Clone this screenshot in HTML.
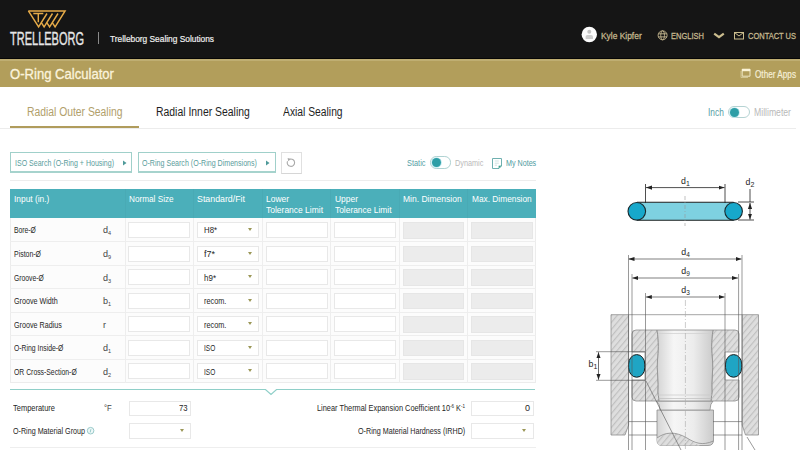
<!DOCTYPE html>
<html><head><meta charset="utf-8">
<style>
*{margin:0;padding:0;box-sizing:border-box}
html,body{width:800px;height:450px;overflow:hidden;background:#fff;font-family:"Liberation Sans",sans-serif}
.a{position:absolute}
.t{position:absolute;white-space:nowrap;line-height:1;transform-origin:0 50%}
.inp{position:absolute;background:#fff;border:1px solid #e8e8e8}
.gry{position:absolute;background:#ececec;border:1px solid #e6e6e6}
.tri{position:absolute;width:0;height:0;border-left:2.4px solid transparent;border-right:2.4px solid transparent;border-top:3.2px solid #9b9757}
.hl{position:absolute;height:1px;background:#eeeeee}
.vl{position:absolute;width:1px;background:#eeeeee}
</style></head><body>
<!-- header -->
<div class="a" style="left:0;top:0;width:800px;height:59px;background:#151515"></div>
<div class="a" style="left:0;top:59px;width:800px;height:28px;background:#b29e5b"></div>
<div class="a" style="left:0;top:59px;width:800px;height:2px;background:#bfae72"></div>
<div class="a" style="left:0;top:58px;width:800px;height:1px;background:#060606"></div>
<!-- logo -->
<svg class="a" style="left:0;top:0" width="800" height="450" viewBox="0 0 800 450">
 <g fill="none" stroke="#e6ab48" stroke-width="1.45" stroke-linejoin="miter" stroke-linecap="butt">
  <path d="M28.4 10.9 L38.6 26.9 L47 13.5"/>
  <path d="M41.3 22.55 L44.1 26.9 L52.5 13.5"/>
  <path d="M46.8 22.55 L49.6 26.9 L58 13.5"/>
  <path d="M52.3 22.55 L55.1 26.9 L65.1 10.9 L28.4 10.9"/>
  <path d="M33.3 13.4 H43.3 M38.3 13.4 V22.2"/>
 </g>
 <line x1="98.5" y1="32" x2="98.5" y2="44" stroke="#8a8a8a" stroke-width="1"/>
 <!-- user icon -->
 <circle cx="589.3" cy="34.5" r="7.7" fill="#fbfbfb"/>
 <circle cx="589.3" cy="31.8" r="2" fill="#c4c4c4"/>
 <path d="M585.6 39 L585.6 36.8 Q585.6 35 587.5 35 L591.1 35 Q593 35 593 36.8 L593 39 Z" fill="#cdcdcd"/>
 <!-- globe -->
 <g fill="none" stroke="#c4b78e" stroke-width="0.9">
  <circle cx="662.6" cy="35.3" r="4.5"/>
  <ellipse cx="662.6" cy="35.3" rx="1.9" ry="4.5"/>
  <line x1="658.3" y1="33.8" x2="666.9" y2="33.8"/>
  <line x1="658.3" y1="36.9" x2="666.9" y2="36.9"/>
 </g>
 <!-- chevron -->
 <path d="M714.2 33.6 L719 37.2 L723.8 33.6" fill="none" stroke="#cbbd8e" stroke-width="2.2"/>
 <!-- mail -->
 <g fill="none" stroke="#cbbd8e" stroke-width="1">
  <rect x="734.5" y="32.5" width="9" height="6.5"/>
  <path d="M734.5 32.5 L739 36 L743.5 32.5"/>
 </g>
 <!-- other apps icon -->
 <path d="M742.2 69.2 L750 69.2 L750 76.2 L742.2 76.2 Z" fill="none" stroke="#eee6c4" stroke-width="1"/>
 <rect x="742" y="69" width="8.2" height="2.2" fill="#fbf3d6"/>
 <path d="M741 71 L741 77.5 L748 77.5" fill="none" stroke="#d9cf9f" stroke-width="0.8"/>
</svg>
<!-- tabs -->
<div class="a" style="left:0;top:127.8px;width:796px;height:1px;background:#ececec"></div>
<div class="a" style="left:10px;top:125.5px;width:128.7px;height:2.6px;background:#b09c5c"></div>
<!-- inch toggle -->
<div class="a" style="left:728.4px;top:105.8px;width:21.2px;height:12px;border:1px solid #b5d3d3;border-radius:6px;background:#fff"></div>
<div class="a" style="left:729.6px;top:107.6px;width:9.6px;height:9.6px;border-radius:50%;background:#2d9ea6;box-shadow:0 0 0 0.8px #bfeaf0"></div>
<!-- buttons -->
<div class="a" style="left:9.5px;top:152px;width:122.5px;height:21px;border:1px solid #a0d0ca;border-bottom:2px solid #a6d3cd"></div>
<div class="a" style="left:137.5px;top:152px;width:138px;height:21px;border:1px solid #a0d0ca;border-bottom:2px solid #a6d3cd"></div>
<div class="a" style="left:281px;top:152px;width:21px;height:21.5px;border:1px solid #e0e0e0;border-bottom:1.5px solid #d6d6d6"></div>
<svg class="a" style="left:0;top:0" width="800" height="450" viewBox="0 0 800 450">
 <path d="M123 160.5 L126.5 163 L123 165.5 Z" fill="#4f9a9a"/>
 <path d="M266 160.5 L269.5 163 L266 165.5 Z" fill="#4f9a9a"/>
 <path d="M289.6 159.2 A3.7 3.7 0 1 1 287.5 161.2" fill="none" stroke="#a9a9a9" stroke-width="1.1"/>
 <path d="M287.6 157.9 L290.9 159.0 L288.3 161.3 Z" fill="#a9a9a9"/>
 <!-- notes icon -->
 <path d="M492.5 158.5 L501.5 158.5 L501.5 166 L499 168.5 L492.5 168.5 Z" fill="none" stroke="#6fb0b0" stroke-width="1"/>
 <path d="M494.8 161 L498.8 161 M494.8 163.2 L498.8 163.2 M494.8 165.2 L497 165.2" stroke="#bcd6d6" stroke-width="0.7"/>
 <path d="M498.6 168.6 L501.6 165.6 L498.6 165.8 Z" fill="#3aa08a"/>
 </svg>
<!-- static toggle -->
<div class="a" style="left:430.1px;top:156.2px;width:21.1px;height:12.4px;border:1px solid #afd2d2;border-radius:6.2px;background:#fff"></div>
<div class="a" style="left:431.6px;top:157.7px;width:9.4px;height:9.4px;border-radius:50%;background:#2d9ea6;box-shadow:0 0 0 0.8px #bfeaf0"></div>
<div class="a" style="left:10px;top:180px;width:526px;height:1px;background:#ededed"></div>
<!-- table -->
<div class="a" style="left:10px;top:189px;width:526px;height:29px;background:#4bafba"></div>
<div class="a" style="left:10px;top:218px;width:526px;height:165px;background:#fcfcfc;border:1px solid #ececec;border-top:none"></div>
<div class='a' style='left:124.5px;top:189px;width:1px;height:29px;background:rgba(0,0,0,0.025)'></div>
<div class='a' style='left:192.5px;top:189px;width:1px;height:29px;background:rgba(0,0,0,0.025)'></div>
<div class='a' style='left:261.5px;top:189px;width:1px;height:29px;background:rgba(0,0,0,0.025)'></div>
<div class='a' style='left:329.5px;top:189px;width:1px;height:29px;background:rgba(0,0,0,0.025)'></div>
<div class='a' style='left:399.2px;top:189px;width:1px;height:29px;background:rgba(0,0,0,0.025)'></div>
<div class='a' style='left:467.3px;top:189px;width:1px;height:29px;background:rgba(0,0,0,0.025)'></div>
<div class='vl' style='left:124.5px;top:218px;height:165px'></div>
<div class='vl' style='left:192.5px;top:218px;height:165px'></div>
<div class='vl' style='left:261.5px;top:218px;height:165px'></div>
<div class='vl' style='left:329.5px;top:218px;height:165px'></div>
<div class='vl' style='left:399.2px;top:218px;height:165px'></div>
<div class='vl' style='left:467.3px;top:218px;height:165px'></div>
<div class='hl' style='left:10px;top:241.07px;width:526px'></div>
<div class='hl' style='left:10px;top:264.64px;width:526px'></div>
<div class='hl' style='left:10px;top:288.21px;width:526px'></div>
<div class='hl' style='left:10px;top:311.78px;width:526px'></div>
<div class='hl' style='left:10px;top:335.35px;width:526px'></div>
<div class='hl' style='left:10px;top:358.92px;width:526px'></div>
<div class='inp' style='left:128.4px;top:222.00px;width:62.0px;height:16px'></div>
<div class='inp' style='left:197.4px;top:222.00px;width:61.6px;height:16px'></div>
<div class='inp' style='left:265.5px;top:222.00px;width:62.9px;height:16px'></div>
<div class='inp' style='left:333.8px;top:222.00px;width:62.2px;height:16px'></div>
<div class='tri' style='left:247.8px;top:228.00px'></div>
<div class='gry' style='left:402.5px;top:222.00px;width:61.9px;height:16.5px'></div>
<div class='gry' style='left:471px;top:222.00px;width:62.3px;height:16.5px'></div>
<div class='inp' style='left:128.4px;top:245.57px;width:62.0px;height:16px'></div>
<div class='inp' style='left:197.4px;top:245.57px;width:61.6px;height:16px'></div>
<div class='inp' style='left:265.5px;top:245.57px;width:62.9px;height:16px'></div>
<div class='inp' style='left:333.8px;top:245.57px;width:62.2px;height:16px'></div>
<div class='tri' style='left:247.8px;top:251.57px'></div>
<div class='gry' style='left:402.5px;top:245.57px;width:61.9px;height:16.5px'></div>
<div class='gry' style='left:471px;top:245.57px;width:62.3px;height:16.5px'></div>
<div class='inp' style='left:128.4px;top:269.14px;width:62.0px;height:16px'></div>
<div class='inp' style='left:197.4px;top:269.14px;width:61.6px;height:16px'></div>
<div class='inp' style='left:265.5px;top:269.14px;width:62.9px;height:16px'></div>
<div class='inp' style='left:333.8px;top:269.14px;width:62.2px;height:16px'></div>
<div class='tri' style='left:247.8px;top:275.14px'></div>
<div class='gry' style='left:402.5px;top:269.14px;width:61.9px;height:16.5px'></div>
<div class='gry' style='left:471px;top:269.14px;width:62.3px;height:16.5px'></div>
<div class='inp' style='left:128.4px;top:292.71px;width:62.0px;height:16px'></div>
<div class='inp' style='left:197.4px;top:292.71px;width:61.6px;height:16px'></div>
<div class='inp' style='left:265.5px;top:292.71px;width:62.9px;height:16px'></div>
<div class='inp' style='left:333.8px;top:292.71px;width:62.2px;height:16px'></div>
<div class='tri' style='left:247.8px;top:298.71px'></div>
<div class='gry' style='left:402.5px;top:292.71px;width:61.9px;height:16.5px'></div>
<div class='gry' style='left:471px;top:292.71px;width:62.3px;height:16.5px'></div>
<div class='inp' style='left:128.4px;top:316.28px;width:62.0px;height:16px'></div>
<div class='inp' style='left:197.4px;top:316.28px;width:61.6px;height:16px'></div>
<div class='inp' style='left:265.5px;top:316.28px;width:62.9px;height:16px'></div>
<div class='inp' style='left:333.8px;top:316.28px;width:62.2px;height:16px'></div>
<div class='tri' style='left:247.8px;top:322.28px'></div>
<div class='gry' style='left:402.5px;top:316.28px;width:61.9px;height:16.5px'></div>
<div class='gry' style='left:471px;top:316.28px;width:62.3px;height:16.5px'></div>
<div class='inp' style='left:128.4px;top:339.85px;width:62.0px;height:16px'></div>
<div class='inp' style='left:197.4px;top:339.85px;width:61.6px;height:16px'></div>
<div class='inp' style='left:265.5px;top:339.85px;width:62.9px;height:16px'></div>
<div class='inp' style='left:333.8px;top:339.85px;width:62.2px;height:16px'></div>
<div class='tri' style='left:247.8px;top:345.85px'></div>
<div class='gry' style='left:402.5px;top:339.85px;width:61.9px;height:16.5px'></div>
<div class='gry' style='left:471px;top:339.85px;width:62.3px;height:16.5px'></div>
<div class='inp' style='left:128.4px;top:363.42px;width:62.0px;height:16px'></div>
<div class='inp' style='left:197.4px;top:363.42px;width:61.6px;height:16px'></div>
<div class='inp' style='left:265.5px;top:363.42px;width:62.9px;height:16px'></div>
<div class='inp' style='left:333.8px;top:363.42px;width:62.2px;height:16px'></div>
<div class='tri' style='left:247.8px;top:369.42px'></div>
<div class='gry' style='left:402.5px;top:363.42px;width:61.9px;height:16.5px'></div>
<div class='gry' style='left:471px;top:363.42px;width:62.3px;height:16.5px'></div>
<!-- bottom -->
<svg class="a" style="left:0;top:0" width="800" height="450" viewBox="0 0 800 450">
 <path d="M10 389.5 L265.5 389.5 L271 394.5 L276.5 389.5 L535 389.5" fill="none" stroke="#8fcfc8" stroke-width="1.2"/>
 <circle cx="90.6" cy="430.7" r="3.3" fill="#eef8f8" stroke="#8fc4c4" stroke-width="0.9"/>
 <path d="M90.9 429.2 L90.2 432.4" stroke="#8fc4c4" stroke-width="0.9"/>
</svg>
<div class="inp" style="left:128.7px;top:400.5px;width:62.5px;height:15px"></div>
<div class="inp" style="left:128.7px;top:423px;width:62.5px;height:15.5px"></div>
<div class="tri" style="left:179.8px;top:429.3px"></div>
<div class="inp" style="left:471px;top:400.5px;width:62.7px;height:15px"></div>
<div class="inp" style="left:471px;top:423px;width:62.7px;height:15.5px"></div>
<div class="tri" style="left:521.5px;top:429.3px"></div>
<div class="a" style="left:10px;top:446.5px;width:526px;height:1px;background:#eeeeee"></div>
<svg class="a" style="left:0;top:0" width="800" height="450" viewBox="0 0 800 450">
 <defs>
  <pattern id="hatch" patternUnits="userSpaceOnUse" width="4.5" height="4.5" patternTransform="rotate(40)">
   <rect width="4.5" height="4.5" fill="#dedede"/>
   <line x1="0.6" y1="0" x2="0.6" y2="4.5" stroke="#bfbfbf" stroke-width="1.1"/>
  </pattern>
  <linearGradient id="rod" x1="0" x2="1" y1="0" y2="0">
   <stop offset="0" stop-color="#d4d4d4"/>
   <stop offset="0.3" stop-color="#f6f6f6"/>
   <stop offset="0.65" stop-color="#ececec"/>
   <stop offset="1" stop-color="#cbcbcb"/>
  </linearGradient>
  <marker id="ar" viewBox="0 0 10 10" refX="10" refY="5" markerWidth="6" markerHeight="6" orient="auto-start-reverse" markerUnits="userSpaceOnUse">
   <path d="M0 1.5 L10 5 L0 8.5 Z" fill="#222"/>
  </marker>
 </defs>
 <!-- O-ring top view -->
 <rect x="637" y="202.3" width="96.6" height="18" fill="#7ed1e1"/>
 <line x1="637" y1="202.3" x2="733.6" y2="202.3" stroke="#1e1e1e" stroke-width="1.1"/>
 <line x1="637" y1="220.3" x2="733.6" y2="220.3" stroke="#1e1e1e" stroke-width="1.1"/>
 <circle cx="636.8" cy="211.3" r="8.8" fill="#17a8cb" stroke="#1a2a2e" stroke-width="1.1"/>
 <circle cx="733.6" cy="211.3" r="8.8" fill="#17a8cb" stroke="#1a2a2e" stroke-width="1.1"/>
 <line x1="685" y1="196" x2="685" y2="226" stroke="#999" stroke-width="0.6" stroke-dasharray="4 2 1 2"/>
 <g stroke="#222" stroke-width="0.8" fill="none">
  <line x1="645.5" y1="184" x2="645.5" y2="203"/>
  <line x1="725" y1="184" x2="725" y2="203"/>
  <line x1="646" y1="187.6" x2="724.5" y2="187.6" marker-start="url(#ar)" marker-end="url(#ar)"/>
  <line x1="738" y1="202" x2="754" y2="202"/>
  <line x1="738" y1="220" x2="754" y2="220"/>
  <line x1="750" y1="189" x2="750" y2="202"/>
  <line x1="750" y1="203" x2="750" y2="219.5" marker-start="url(#ar)" marker-end="url(#ar)"/>
 </g>
 <!-- housing -->
 <g stroke="#2a2a2a" stroke-width="0.6" fill="none">
  <line x1="628.5" y1="259" x2="741.5" y2="259" marker-start="url(#ar)" marker-end="url(#ar)"/>
  <line x1="632.3" y1="278" x2="738" y2="278" marker-start="url(#ar)" marker-end="url(#ar)"/>
  <line x1="645.8" y1="297" x2="724.7" y2="297" marker-start="url(#ar)" marker-end="url(#ar)"/>
 </g>
 <!-- housing blocks -->
 <path d="M611 314.7 L628.6 314.7 L628.6 425 L625 435 L611 435 Z" fill="url(#hatch)" stroke="#8d8d8d" stroke-width="0.8"/>
 <path d="M742.2 314.7 L758.5 314.7 L758.5 435 L745.5 435 L742.2 425 Z" fill="url(#hatch)" stroke="#8d8d8d" stroke-width="0.8"/>
 <line x1="628.6" y1="314.7" x2="742.2" y2="314.7" stroke="#8d8d8d" stroke-width="0.8"/>
 <!-- rod below -->
 <path d="M657 410 L713.5 410 L713.5 440 Q713.5 445.5 708 445.5 L662 445.5 Q657 445.5 657 440 Z" fill="url(#rod)" stroke="#8d8d8d" stroke-width="0.8"/>
 <path d="M656.5 401 L713 401 Q710 404 710 410 L660 410 Q660 404 656.5 401 Z" fill="url(#rod)" stroke="#8d8d8d" stroke-width="0.8"/>
 <path d="M657 438 C665 432 675 431 687 438 C693 442 697 444.5 700 445.5 L662 445.5 Q657 445.5 657 440 Z" fill="url(#hatch)" stroke="none"/>
 <path d="M657 438 C665 432 675 431 687 438 C695 443 702 446 713.5 441" fill="none" stroke="#8d8d8d" stroke-width="0.8"/>
 <!-- piston hatched parts -->
 <path d="M636 330 L657 330 C659 342 658.5 352 657.5 360 C656.5 370 659 382 658 392 L659 401 L636 401 Q632 401 632 397 L632 380 L645 380 L645 352 L632 352 L632 334 Q632 330 636 330 Z" fill="url(#hatch)" stroke="#8d8d8d" stroke-width="0.8"/>
 <path d="M735 330 L713 330 C711 342 711.5 352 712.5 360 C713.5 370 711 382 712 392 L711 401 L735 401 Q739 401 739 397 L739 380 L725 380 L725 352 L739 352 L739 334 Q739 330 735 330 Z" fill="url(#hatch)" stroke="#8d8d8d" stroke-width="0.8"/>
 <!-- rod -->
 <path d="M657 330 L713 330 C711 342 711.5 352 712.5 360 C713.5 370 711 382 712 392 L711 401 L659 401 L658 392 C659 382 656.5 370 657.5 360 C658.5 352 659 342 657 330 Z" fill="url(#rod)" stroke="#8d8d8d" stroke-width="0.8"/>
 <line x1="658" y1="333.5" x2="712" y2="333.5" stroke="#cfcfcf" stroke-width="0.7"/>
 <line x1="658" y1="395" x2="712" y2="395" stroke="#c8c8c8" stroke-width="0.7"/>
 <line x1="658.5" y1="398.5" x2="711.5" y2="398.5" stroke="#bdbdbd" stroke-width="0.7"/>
 <!-- o-rings -->
 <rect x="628.6" y="354.6" width="16.2" height="22.6" rx="8" ry="9.5" fill="#1fa5c4" stroke="#1a1a1a" stroke-width="1"/>
 <rect x="725.5" y="354.6" width="16.2" height="22.6" rx="8" ry="9.5" fill="#1fa5c4" stroke="#1a1a1a" stroke-width="1"/>
 <!-- center line -->
 <line x1="685.4" y1="300" x2="685.4" y2="450" stroke="#aaa" stroke-width="0.6" stroke-dasharray="6 2 1 2"/>
 <!-- extension lines -->
 <g stroke="#555" stroke-width="0.6">
  <line x1="628.5" y1="255" x2="628.5" y2="450"/>
  <line x1="742" y1="255" x2="742" y2="450"/>
  <line x1="632" y1="274" x2="632" y2="450"/>
  <line x1="738.6" y1="274" x2="738.6" y2="450"/>
  <line x1="645.5" y1="293" x2="645.5" y2="450"/>
  <line x1="725" y1="293" x2="725" y2="450"/>
  <line x1="629" y1="421.6" x2="657" y2="421.6"/>
  <line x1="713" y1="421.6" x2="742" y2="421.6"/>
  <line x1="629" y1="435" x2="657" y2="435"/>
  <line x1="713" y1="435" x2="742" y2="435"/>
  <line x1="596" y1="351.7" x2="645" y2="351.7"/>
  <line x1="596" y1="380.3" x2="645" y2="380.3"/>
  <line x1="646" y1="381" x2="681" y2="450"/>
  <line x1="747" y1="437" x2="755" y2="450"/>
 </g>
 <line x1="598.5" y1="352.2" x2="598.5" y2="379.8" stroke="#333" stroke-width="0.7" marker-start="url(#ar)" marker-end="url(#ar)"/>
</svg>

<div class='t' style='left:10px;top:30.69px;font-size:17.5px;color:#e6e6e6;transform:scaleX(0.629);-webkit-text-stroke:0.35px #e6e6e6;'>TRELLEBORG</div>
<div class='t' style='left:110px;top:33.96px;font-size:9.5px;color:#f0f0f0;transform:scaleX(0.878);-webkit-text-stroke:0.2px #f0f0f0;'>Trelleborg Sealing Solutions</div>
<div class='t' style='left:601px;top:31.37px;font-size:9.6px;color:#c4b78e;transform:scaleX(0.877);-webkit-text-stroke:0.3px #c4b78e;'>Kyle Kipfer</div>
<div class='t' style='left:671px;top:31.37px;font-size:9.6px;color:#c4b78e;transform:scaleX(0.783);-webkit-text-stroke:0.3px #c4b78e;'>ENGLISH</div>
<div class='t' style='left:748px;top:31.37px;font-size:9.6px;color:#c4b78e;transform:scaleX(0.781);-webkit-text-stroke:0.3px #c4b78e;'>CONTACT US</div>
<div class='t' style='left:9.8px;top:68.32px;font-size:13.8px;color:#fbf3dc;transform:scaleX(0.948);-webkit-text-stroke:0.3px #fbf3dc;'>O-Ring Calculator</div>
<div class='t' style='left:755px;top:70.03px;font-size:10px;color:#f5eed6;transform:scaleX(0.819);-webkit-text-stroke:0.2px #f5eed6;'>Other Apps</div>
<div class='t' style='left:26.6px;top:105.94px;font-size:12px;color:#b1a06b;transform:scaleX(0.862);'>Radial Outer Sealing</div>
<div class='t' style='left:155.7px;top:106.14px;font-size:12px;color:#1e1e1e;transform:scaleX(0.868);'>Radial Inner Sealing</div>
<div class='t' style='left:282.5px;top:106.14px;font-size:12px;color:#1e1e1e;transform:scaleX(0.859);'>Axial Sealing</div>
<div class='t' style='left:708px;top:108.03px;font-size:10px;color:#59a0a6;transform:scaleX(0.836);'>Inch</div>
<div class='t' style='left:754.4px;top:108.03px;font-size:10px;color:#b9b9b9;transform:scaleX(0.865);'>Millimeter</div>
<div class='t' style='left:15px;top:158.98px;font-size:9px;color:#5a9d9c;transform:scaleX(0.781);'>ISO Search (O-Ring + Housing)</div>
<div class='t' style='left:142.4px;top:158.98px;font-size:9px;color:#5a9d9c;transform:scaleX(0.787);'>O-Ring Search (O-Ring Dimensions)</div>
<div class='t' style='left:407px;top:158.88px;font-size:9px;color:#55a0a4;transform:scaleX(0.822);'>Static</div>
<div class='t' style='left:455.3px;top:158.88px;font-size:9px;color:#b9b9b9;transform:scaleX(0.811);'>Dynamic</div>
<div class='t' style='left:506px;top:158.88px;font-size:9px;color:#4f9ba0;transform:scaleX(0.794);'>My Notes</div>
<div class='t' style='left:14px;top:195.28px;font-size:9px;color:#ffffff;transform:scaleX(0.931);'>Input (in.)</div>
<div class='t' style='left:129.4px;top:195.28px;font-size:9px;color:#ffffff;transform:scaleX(0.910);'>Normal Size</div>
<div class='t' style='left:197px;top:195.28px;font-size:9px;color:#ffffff;transform:scaleX(0.979);'>Standard/Fit</div>
<div class='t' style='left:266.2px;top:194.88px;font-size:9px;color:#ffffff;transform:scaleX(0.938);'>Lower</div>
<div class='t' style='left:266.2px;top:205.58px;font-size:9px;color:#ffffff;transform:scaleX(0.942);'>Tolerance Limit</div>
<div class='t' style='left:334.7px;top:194.88px;font-size:9px;color:#ffffff;transform:scaleX(0.938);'>Upper</div>
<div class='t' style='left:334.7px;top:205.58px;font-size:9px;color:#ffffff;transform:scaleX(0.933);'>Tolerance Limit</div>
<div class='t' style='left:402.9px;top:195.28px;font-size:9px;color:#ffffff;transform:scaleX(0.946);'>Min. Dimension</div>
<div class='t' style='left:471.9px;top:195.28px;font-size:9px;color:#ffffff;transform:scaleX(0.925);'>Max. Dimension</div>
<div class='t' style='left:13.8px;top:226.48px;font-size:9px;color:#262626;transform:scaleX(0.755);'>Bore-Ø</div>
<div class='t' style='left:103px;top:226.48px;font-size:9px;color:#444;'>d<sub style="font-size:5.5px;vertical-align:-1.5px">4</sub></div>
<div class='t' style='left:203.7px;top:226.48px;font-size:9px;color:#262626;transform:scaleX(0.866);'>H8*</div>
<div class='t' style='left:13.8px;top:250.03px;font-size:9px;color:#262626;transform:scaleX(0.771);'>Piston-Ø</div>
<div class='t' style='left:103px;top:250.03px;font-size:9px;color:#444;'>d<sub style="font-size:5.5px;vertical-align:-1.5px">9</sub></div>
<div class='t' style='left:203.7px;top:250.03px;font-size:9px;color:#262626;transform:scaleX(0.999);'>f7*</div>
<div class='t' style='left:13.8px;top:273.58px;font-size:9px;color:#262626;transform:scaleX(0.754);'>Groove-Ø</div>
<div class='t' style='left:103px;top:273.58px;font-size:9px;color:#444;'>d<sub style="font-size:5.5px;vertical-align:-1.5px">3</sub></div>
<div class='t' style='left:203.7px;top:273.58px;font-size:9px;color:#262626;transform:scaleX(0.888);'>h9*</div>
<div class='t' style='left:13.8px;top:297.13px;font-size:9px;color:#262626;transform:scaleX(0.796);'>Groove Width</div>
<div class='t' style='left:103px;top:297.13px;font-size:9px;color:#444;'>b<sub style="font-size:5.5px;vertical-align:-1.5px">1</sub></div>
<div class='t' style='left:203.7px;top:297.13px;font-size:9px;color:#262626;transform:scaleX(0.810);'>recom.</div>
<div class='t' style='left:13.8px;top:320.68px;font-size:9px;color:#262626;transform:scaleX(0.796);'>Groove Radius</div>
<div class='t' style='left:103px;top:320.68px;font-size:9px;color:#444;'>r</div>
<div class='t' style='left:203.7px;top:320.68px;font-size:9px;color:#262626;transform:scaleX(0.810);'>recom.</div>
<div class='t' style='left:13.8px;top:344.23px;font-size:9px;color:#262626;transform:scaleX(0.760);'>O-Ring Inside-Ø</div>
<div class='t' style='left:103px;top:344.23px;font-size:9px;color:#444;'>d<sub style="font-size:5.5px;vertical-align:-1.5px">1</sub></div>
<div class='t' style='left:203.7px;top:344.23px;font-size:9px;color:#262626;transform:scaleX(0.728);'>ISO</div>
<div class='t' style='left:13.8px;top:367.78px;font-size:9px;color:#262626;transform:scaleX(0.760);'>OR Cross-Section-Ø</div>
<div class='t' style='left:103px;top:367.78px;font-size:9px;color:#444;'>d<sub style="font-size:5.5px;vertical-align:-1.5px">2</sub></div>
<div class='t' style='left:203.7px;top:367.78px;font-size:9px;color:#262626;transform:scaleX(0.728);'>ISO</div>
<div class='t' style='left:13px;top:404.08px;font-size:9px;color:#262626;transform:scaleX(0.831);'>Temperature</div>
<div class='t' style='left:103.5px;top:404.08px;font-size:9px;color:#444;transform:scaleX(0.856);'>°F</div>
<div class='t' style='left:178.8px;top:404.08px;font-size:9px;color:#262626;transform:scaleX(0.859);'>73</div>
<div class='t' style='left:13px;top:426.68px;font-size:9px;color:#262626;transform:scaleX(0.795);'>O-Ring Material Group</div>
<div class='t' style='left:317px;top:403.68px;font-size:9px;color:#262626;transform:scaleX(0.820);'>Linear Thermal Expansion Coefficient 10<sup style="font-size:5.5px;vertical-align:3px">-6</sup> K<sup style="font-size:5.5px;vertical-align:3px">-1</sup></div>
<div class='t' style='left:525px;top:403.68px;font-size:9px;color:#262626;'>0</div>
<div class='t' style='left:357.8px;top:427.28px;font-size:9px;color:#262626;transform:scaleX(0.797);'>O-Ring Material Hardness (IRHD)</div>
<div class='t' style='left:681px;top:177.25px;font-size:8.8px;color:#262626;'>d<sub style="font-size:7px;vertical-align:-2px">1</sub></div>
<div class='t' style='left:745.5px;top:178.05px;font-size:8.8px;color:#262626;'>d<sub style="font-size:7px;vertical-align:-2px">2</sub></div>
<div class='t' style='left:681.3px;top:248.25px;font-size:8.8px;color:#262626;'>d<sub style="font-size:6.5px;vertical-align:-2px">4</sub></div>
<div class='t' style='left:681.3px;top:267.25px;font-size:8.8px;color:#262626;'>d<sub style="font-size:6.5px;vertical-align:-2px">9</sub></div>
<div class='t' style='left:681.3px;top:286.25px;font-size:8.8px;color:#262626;'>d<sub style="font-size:6.5px;vertical-align:-2px">3</sub></div>
<div class='t' style='left:588.5px;top:360.05px;font-size:8.8px;color:#262626;'>b<sub style="font-size:7px;vertical-align:-2px">1</sub></div>
</body></html>
